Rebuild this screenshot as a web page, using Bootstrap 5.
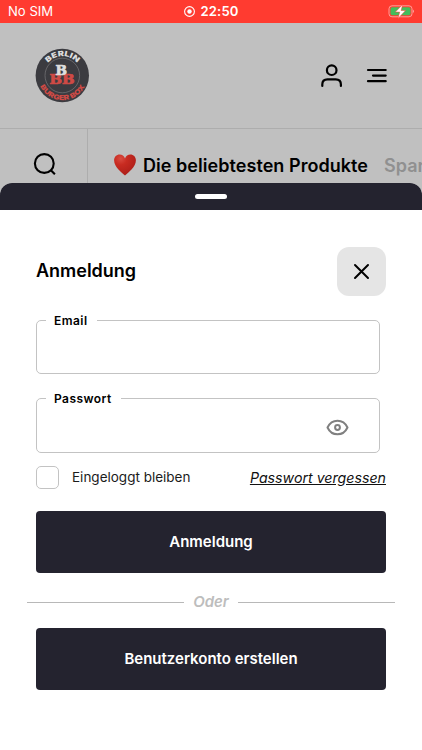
<!DOCTYPE html>
<html lang="de">
<head>
<meta charset="utf-8">
<meta name="viewport" content="width=device-width, initial-scale=1">
<title>Anmeldung</title>
<link href="https://cdn.jsdelivr.net/npm/bootstrap@5.3.0/dist/css/bootstrap.min.css" rel="stylesheet">
<style>
body{font-family:Inter,"Liberation Sans",sans-serif;background:#c0c0c0;color:#000;height:750px}
svg{display:block;flex:none}
.statusbar{height:23px;background:#ff3b30;color:#fff;font-size:13.1px;padding:0 8px;line-height:25px}
.statusbar>div{flex:1 1 0}
.clock{font-weight:600;letter-spacing:.15px}
.topbar{height:106px;padding:0 35px;border-bottom:1px solid #adadad}
.tabs{height:70px}
.tab-search{flex:none;width:88px;border-right:1px solid #adadad;padding:23px 0 0 33px}
.tab-items{font-size:18px;font-weight:600;line-height:24px;padding:24px 0 0 25px;white-space:nowrap}
.tab-items span{padding-top:1px}
.tab-main{letter-spacing:.05px}
.tab-muted{color:#909090}
.sheet{top:183px;height:567px;background:#fff}
.sheet,.handle{border-radius:12px 12px 0 0}
.handle{height:27px;background:#24232f}
.grip{width:32px;height:5px;border-radius:3px;background:#fff}
.sheet-body{padding:36.5px 36px 0}
.title{font-size:18px;font-weight:600;letter-spacing:-.02px}
.btn-x{width:49px;height:49px;border-radius:12px;background:#e5e5e5}
.field{width:344px;height:54.5px}
.field input{height:100%;border:1.3px solid #c3c3c3;border-radius:5px}
.field label{left:10px;top:-9px;padding:0 9px 0 8px;background:#fff;font-size:12px;font-weight:600;line-height:20px;letter-spacing:.45px}
.eye{right:31px;top:19px}
.options{height:58px;padding-bottom:9px}
.box{width:23px;height:23px;border:1.3px solid #c3c3c3!important;border-radius:5px!important}
.stay{font-size:13.5px;color:#1c1c1c;margin-left:13px}
.forgot{font-size:14.2px;color:#111;line-height:20px;padding-top:2px}
.btn-ink{height:62px;background:#24232f;color:#fff;border:0;border-radius:4px;font-size:15px;font-weight:600;padding-top:8px}
.btn-ink:hover{background:#34323f;color:#fff}
.or{margin:0 -9px;height:55px;padding-top:5px;color:#bdbdbd;font-size:15px;font-weight:600}
.or span{padding:0 9.5px}
.rule{height:1px;background:#b8b8b8}
</style>
<script src="https://cdn.jsdelivr.net/npm/bootstrap@5.3.0/dist/js/bootstrap.bundle.min.js"></script>
</head>
<body class="position-relative overflow-hidden">
<div class="statusbar d-flex align-items-center">
  <div>No SIM</div>
  <span class="clock d-flex align-items-center gap-1">
    <svg width="13" height="13" viewBox="0 0 13 13"><circle cx="6.5" cy="6.5" r="4.9" fill="none" stroke="#fff" stroke-width="1.1"/><circle cx="6.5" cy="6.5" r="2.2" fill="#fff"/></svg>22:50
  </span>
  <div class="d-flex justify-content-end">
    <svg width="28" height="15" viewBox="0 0 28 15"><rect x="3" y="1.8" width="23" height="11" rx="3" fill="none" stroke="#ff9d97" stroke-width="1"/><rect x="4.5" y="3.3" width="20" height="8" rx="1.7" fill="#42bd5b"/><path d="M26.9 5.6q1.1.4 1.1 1.7t-1.1 1.7z" fill="#ff9d97"/><path d="M16.7.4 9.3 8.1h4.4L12 14.4l7.6-7.9h-4.5z" fill="#fff" stroke="#ff3b30" stroke-width=".5"/></svg>
  </div>
</div>
<header class="topbar d-flex align-items-center justify-content-between">
  <svg width="55" height="55" viewBox="0 0 55 55" font-family="Inter, sans-serif" font-weight="900" text-anchor="middle">
    <defs><path id="arcTop" d="M8.2 27.5a19.3 19.3 0 0 1 38.6 0"/><path id="arcBottom" d="M2.8 27.5a24.7 24.7 0 0 0 49.4 0"/></defs>
    <circle cx="27.3" cy="27.5" r="26.7" fill="#3b3b40"/><circle cx="27.3" cy="27.5" r="17.3" fill="none" stroke="#77777a" stroke-width=".7"/>
    <text font-size="7.4" fill="#ddd"><textPath href="#arcTop" startOffset="50%" textLength="33" lengthAdjust="spacingAndGlyphs">BERLIN</textPath></text>
    <text font-size="6.8" fill="#cf4a45"><textPath href="#arcBottom" startOffset="50%" textLength="55" lengthAdjust="spacingAndGlyphs">BURGER BOX</textPath></text>
    <g font-family="'DejaVu Serif', serif" font-weight="bold" font-size="12">
    <text x="27" y="35.5" fill="#cf4a45" stroke="#cf4a45" stroke-width=".7" textLength="25" lengthAdjust="spacingAndGlyphs">BB</text>
    <text x="26.3" y="26.8" fill="#ddd" stroke="#ddd" stroke-width=".7" textLength="11.5" lengthAdjust="spacingAndGlyphs">B</text></g>
  </svg>
  <div class="d-flex align-items-center">
    <svg class="me-4" width="22" height="24" viewBox="0 0 22 24" fill="none" stroke="#000" stroke-width="2.2" stroke-linecap="round"><circle cx="11.7" cy="6.2" r="4.8"/><path d="M2.3 22v-1.5q0-5.2 5.2-5.2h8.2q5.2 0 5.2 5.2V22"/></svg>
    <svg width="21" height="18" viewBox="0 0 21 18" stroke="#000" stroke-width="2.2" stroke-linecap="round"><path d="M2 3h17.7M7 8.6h12.7M2 14.2h17.7"/></svg>
  </div>
</header>
<nav class="tabs d-flex overflow-hidden">
  <div class="tab-search"><svg width="24" height="25" viewBox="0 0 24 25" fill="none" stroke="#000" stroke-width="2.1"><circle cx="11.3" cy="11.5" r="9.4"/><path d="m17.6 18 4.3 4.3"/></svg></div>
  <div class="tab-items d-flex align-items-start">
    <svg width="30" height="24" viewBox="0 0 30 24"><defs><radialGradient id="heart" cx=".3" cy=".2" r=".85"><stop offset="0" stop-color="#d94b40"/><stop offset=".35" stop-color="#c82b21"/><stop offset="1" stop-color="#aa1d18"/></radialGradient></defs><path d="M12 22.5C8.5 19.3 1.1 14 1.1 7.3 1.1 3.7 3.6 1.4 6.6 1.4c2.6 0 4.5 1.5 5.4 4.1.9-2.6 2.8-4.1 5.4-4.1 3 0 5.5 2.3 5.5 5.9 0 6.7-7.4 12-10.9 15.2z" fill="url(#heart)"/></svg>
    <span class="tab-main">Die beliebtesten Produkte</span><span class="tab-muted ms-3">Spar</span>
  </div>
</nav>
<section class="sheet position-absolute start-0 w-100">
  <div class="handle d-flex justify-content-center align-items-center"><div class="grip"></div></div>
  <form class="sheet-body">
    <div class="d-flex justify-content-between align-items-center mb-4">
      <h1 class="title m-0">Anmeldung</h1>
      <button type="button" class="btn btn-x p-0 border-0 d-flex align-items-center justify-content-center" aria-label="Schließen"><svg width="17" height="17" viewBox="0 0 17 17" stroke="#000" stroke-width="2" stroke-linecap="round"><path d="m2 2 13 13M15 2 2 15"/></svg></button>
    </div>
    <div class="field position-relative mb-4"><input id="email" type="email" class="form-control"><label class="position-absolute" for="email">Email</label></div>
    <div class="field position-relative"><input id="pw" type="password" class="form-control"><label class="position-absolute" for="pw">Passwort</label>
      <svg class="eye position-absolute" width="23" height="21" viewBox="0 0 23 21" fill="none" stroke="#808080" stroke-width="2"><path d="M1.5 10.5C3.7 5.8 7 3.7 11.5 3.7s7.8 2.1 10 6.8c-2.2 4.7-5.5 6.8-10 6.8S3.7 15.2 1.5 10.5z" stroke-linejoin="round"/><circle cx="11.5" cy="10.5" r="2.4"/></svg></div>
    <div class="options d-flex justify-content-between align-items-center">
      <div class="d-flex align-items-center"><input class="form-check-input box m-0" type="checkbox" id="stay"><label class="stay" for="stay">Eingeloggt bleiben</label></div>
      <a class="forgot fst-italic" href="#">Passwort vergessen</a>
    </div>
    <button type="submit" class="btn btn-ink w-100">Anmeldung</button>
    <div class="or d-flex align-items-center"><div class="rule flex-fill"></div><span class="fst-italic">Oder</span><div class="rule flex-fill"></div></div>
    <button type="button" class="btn btn-ink w-100">Benutzerkonto erstellen</button>
  </form>
</section>
</body>
</html>
